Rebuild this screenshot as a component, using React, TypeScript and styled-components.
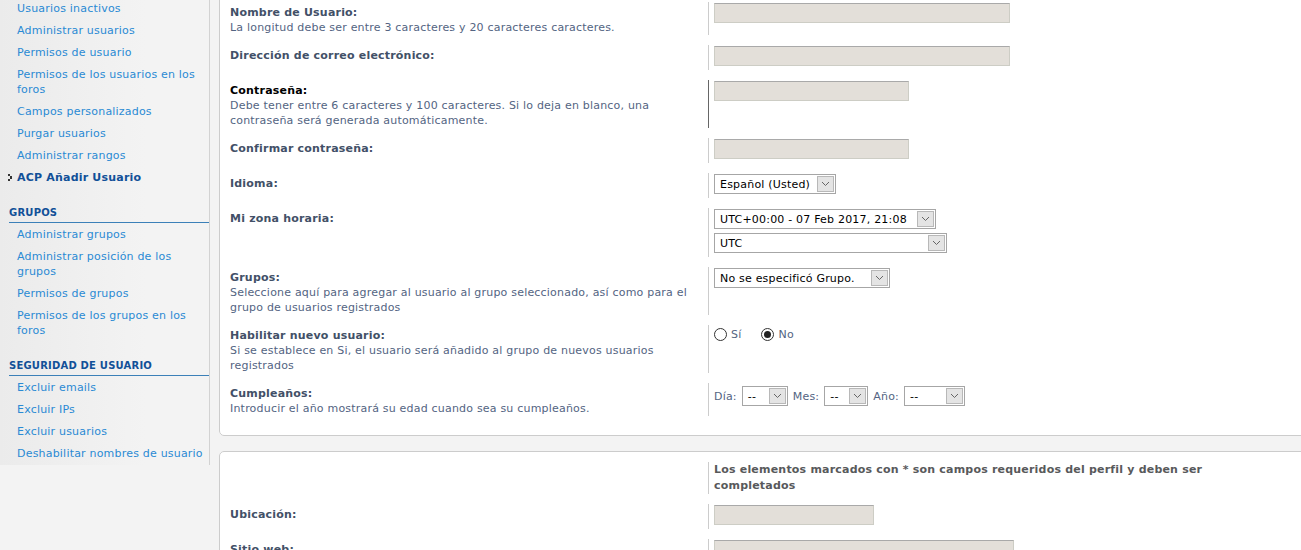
import React from "react";
import styled, { createGlobalStyle } from "styled-components";

const GlobalStyle = createGlobalStyle`
  html, body {
    margin: 0;
    padding: 0;
    background: #f3f3f3;
    overflow: hidden;
  }
  body {
    font-family: Verdana, "DejaVu Sans", sans-serif;
    font-size: 11px;
    letter-spacing: 0.2px;
  }
`;

const Page = styled.div`
  display: flex;
  align-items: flex-start;
  width: 1301px;
  height: 550px;
  overflow: hidden;
`;

const Sidebar = styled.nav`
  width: 209px;
  flex-shrink: 0;
  margin-top: -2px;
  border-right: 1px solid #d2d2d2;
  background: linear-gradient(to right, #ebebeb, #f3f3f3 70%);
`;

const MenuList = styled.ul<{ $first?: boolean }>`
  list-style: none;
  margin: ${(p) => (p.$first ? "0" : "1px 0 0")};
  padding: 0;
`;

const MenuItem = styled.li<{ $active?: boolean }>`
  position: relative;
  padding: 3px 2px 4px 17px;
  line-height: 15px;
  color: ${(p) => (p.$active ? "#115098" : "#2a8ad4")};
  font-weight: ${(p) => (p.$active ? "bold" : "normal")};
`;

const Bullet = styled.svg`
  position: absolute;
  left: 8px;
  top: 7px;
`;

const MenuHeading = styled.p`
  margin: 17px 0 0 9px;
  padding: 0 0 2px;
  font-size: 10px;
  line-height: 14px;
  font-weight: bold;
  text-transform: uppercase;
  color: #115098;
  border-bottom: 1px solid #3b80b8;
`;

const Main = styled.main`
  display: flex;
  flex-direction: column;
  gap: 15px;
  margin: -9px 0 0 9px;
  width: 1110px;
  flex-shrink: 0;
`;

const Panel = styled.fieldset`
  margin: 0;
  padding: 5px 0 14px 10px;
  background: #fff;
  border: 1px solid #cccccc;
  border-radius: 5px;
`;

const Row = styled.dl`
  display: flex;
  align-items: stretch;
  margin: 0;
  padding: 5px 0;
`;

const Term = styled.dt`
  width: 468px;
  padding: 3px 10px 0 0;
  flex-shrink: 0;
  line-height: 15px;
`;

const Def = styled.dd<{ $hover?: boolean; $flush?: boolean }>`
  margin: 0;
  padding: ${(p) => (p.$flush ? "0 0 0 5px" : "1px 0 4px 5px")};
  border-left: 1px solid ${(p) => (p.$hover ? "#666666" : "#cccccc")};
  display: flex;
  flex-direction: column;
  align-items: flex-start;
  gap: 4px;
  line-height: 15px;
`;

const Label = styled.label<{ $hover?: boolean }>`
  display: block;
  font-weight: bold;
  color: ${(p) => (p.$hover ? "#000000" : "#425067")};
`;

const Explain = styled.span`
  display: block;
  color: #536482;
`;

const Note = styled.strong`
  display: block;
  width: 520px;
  line-height: 16px;
  color: #58595b;
`;

const TextInput = styled.input<{ $w: number }>`
  box-sizing: border-box;
  width: ${(p) => p.$w}px;
  height: 20px;
  margin: 0;
  padding: 2px 4px;
  background: #e3dfd9;
  border: 1px solid #cdcdc5;
  border-top-color: #a9a9a9;
  font: inherit;
`;

const SelectBox = styled.span<{ $w: number }>`
  box-sizing: border-box;
  display: inline-flex;
  align-items: stretch;
  width: ${(p) => p.$w}px;
  height: 20px;
  border: 1px solid #a6a6a6;
  background: #fff;
  color: #000;
  font-size: 11px;
`;

const SelectText = styled.span`
  flex: 1;
  padding: 0 5px;
  line-height: 19px;
  white-space: nowrap;
  overflow: hidden;
`;

const SelectArrow = styled.span`
  box-sizing: border-box;
  width: 17px;
  margin: 1px;
  border: 1px solid #b8b8b8;
  background: #e4e4e4;
  display: flex;
  align-items: center;
  justify-content: center;
`;

const Inline = styled.div`
  display: flex;
  align-items: center;
  gap: 5px;
  padding-top: 2px;
  color: #536482;
`;

const RadioGroup = styled.div`
  display: flex;
  align-items: center;
  padding-top: 1px;
  color: #536482;
`;

const RadioOption = styled.span`
  display: inline-flex;
  align-items: center;
  gap: 4px;
  margin-right: 20px;
`;

const RadioDot = styled.span<{ $checked?: boolean }>`
  box-sizing: border-box;
  width: 13px;
  height: 13px;
  border-radius: 50%;
  border: 1px solid #333;
  background: #fff;
  display: inline-flex;
  align-items: center;
  justify-content: center;
  &::after {
    content: "";
    display: ${(p) => (p.$checked ? "block" : "none")};
    width: 7px;
    height: 7px;
    border-radius: 50%;
    background: #222;
  }
`;

function Select({ w, value }: { w: number; value: string }) {
  return (
    <SelectBox $w={w}>
      <SelectText>{value}</SelectText>
      <SelectArrow>
        <svg width="9" height="6" viewBox="0 0 9 6">
          <polyline points="1,1 4.5,4.5 8,1" fill="none" stroke="#666" strokeWidth="1" />
        </svg>
      </SelectArrow>
    </SelectBox>
  );
}

const userItems = [
  "Usuarios inactivos",
  "Administrar usuarios",
  "Permisos de usuario",
  "Permisos de los usuarios en los foros",
  "Campos personalizados",
  "Purgar usuarios",
  "Administrar rangos",
];

const groupItems = [
  "Administrar grupos",
  "Administrar posición de los grupos",
  "Permisos de grupos",
  "Permisos de los grupos en los foros",
];

const securityItems = [
  "Excluir emails",
  "Excluir IPs",
  "Excluir usuarios",
  "Deshabilitar nombres de usuario",
];

export default function App() {
  return (
    <>
      <GlobalStyle />
      <Page>
        <Sidebar>
          <MenuList $first>
            {userItems.map((t) => (
              <MenuItem key={t}>{t}</MenuItem>
            ))}
            <MenuItem $active>
              <Bullet width="5" height="7" viewBox="0 0 5 7">
                <path d="M0 0h2v2H0zM2 2h2v3H2zM0 5h2v2H0z" fill="#333" />
              </Bullet>
              ACP Añadir Usuario
            </MenuItem>
          </MenuList>
          <MenuHeading>Grupos</MenuHeading>
          <MenuList>
            {groupItems.map((t) => (
              <MenuItem key={t}>{t}</MenuItem>
            ))}
          </MenuList>
          <MenuHeading>Seguridad de usuario</MenuHeading>
          <MenuList>
            {securityItems.map((t) => (
              <MenuItem key={t}>{t}</MenuItem>
            ))}
          </MenuList>
        </Sidebar>

        <Main>
          <Panel>
            <Row>
              <Term>
                <Label>Nombre de Usuario:</Label>
                <Explain>La longitud debe ser entre 3 caracteres y 20 caracteres caracteres.</Explain>
              </Term>
              <Def>
                <TextInput $w={296} />
              </Def>
            </Row>
            <Row>
              <Term>
                <Label>Dirección de correo electrónico:</Label>
              </Term>
              <Def>
                <TextInput $w={296} />
              </Def>
            </Row>
            <Row>
              <Term>
                <Label $hover>Contraseña:</Label>
                <Explain>
                  Debe tener entre 6 caracteres y 100 caracteres. Si lo deja en blanco, una contraseña será
                  generada automáticamente.
                </Explain>
              </Term>
              <Def $hover>
                <TextInput $w={195} type="password" />
              </Def>
            </Row>
            <Row>
              <Term>
                <Label>Confirmar contraseña:</Label>
              </Term>
              <Def>
                <TextInput $w={195} type="password" />
              </Def>
            </Row>
            <Row>
              <Term>
                <Label>Idioma:</Label>
              </Term>
              <Def>
                <Select w={122} value="Español (Usted)" />
              </Def>
            </Row>
            <Row>
              <Term>
                <Label>Mi zona horaria:</Label>
              </Term>
              <Def>
                <Select w={222} value="UTC+00:00 - 07 Feb 2017, 21:08" />
                <Select w={233} value="UTC" />
              </Def>
            </Row>
            <Row>
              <Term>
                <Label>Grupos:</Label>
                <Explain>
                  Seleccione aquí para agregar al usuario al grupo seleccionado, así como para el grupo de
                  usuarios registrados
                </Explain>
              </Term>
              <Def>
                <Select w={176} value="No se especificó Grupo." />
              </Def>
            </Row>
            <Row>
              <Term>
                <Label>Habilitar nuevo usuario:</Label>
                <Explain>
                  Si se establece en Si, el usuario será añadido al grupo de nuevos usuarios registrados
                </Explain>
              </Term>
              <Def>
                <RadioGroup>
                  <RadioOption>
                    <RadioDot /> Sí
                  </RadioOption>
                  <RadioOption>
                    <RadioDot $checked /> No
                  </RadioOption>
                </RadioGroup>
              </Def>
            </Row>
            <Row>
              <Term>
                <Label>Cumpleaños:</Label>
                <Explain>Introducir el año mostrará su edad cuando sea su cumpleaños.</Explain>
              </Term>
              <Def>
                <Inline>
                  Día: <Select w={46} value="--" /> Mes: <Select w={44} value="--" /> Año:{" "}
                  <Select w={61} value="--" />
                </Inline>
              </Def>
            </Row>
          </Panel>

          <Panel>
            <Row>
              <Term />
              <Def $flush>
                <Note>Los elementos marcados con * son campos requeridos del perfil y deben ser completados</Note>
              </Def>
            </Row>
            <Row>
              <Term>
                <Label>Ubicación:</Label>
              </Term>
              <Def>
                <TextInput $w={160} />
              </Def>
            </Row>
            <Row>
              <Term>
                <Label>Sitio web:</Label>
              </Term>
              <Def>
                <TextInput $w={300} />
              </Def>
            </Row>
          </Panel>
        </Main>
      </Page>
    </>
  );
}
